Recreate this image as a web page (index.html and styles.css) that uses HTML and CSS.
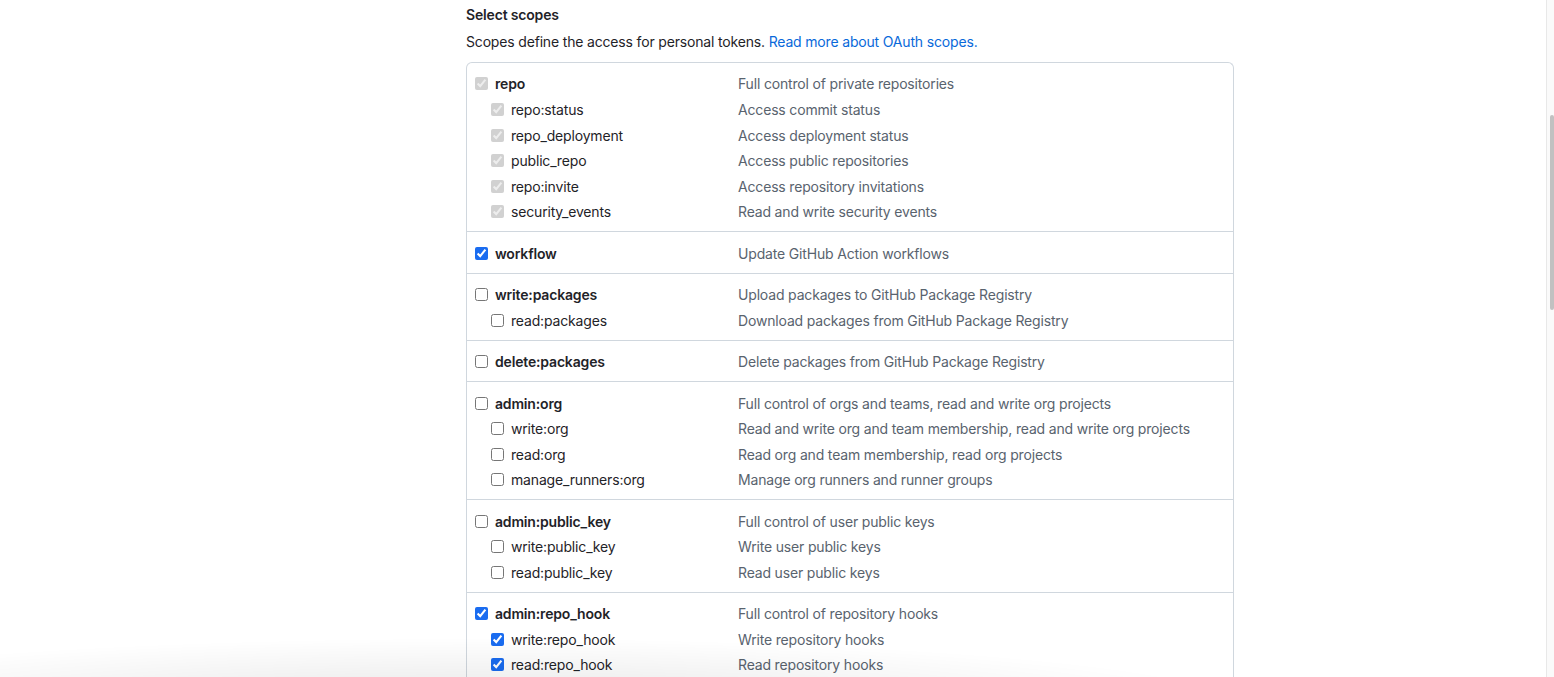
FILE: index.html
```html
<!DOCTYPE html>
<html lang="en">
<head>
<meta charset="utf-8">
<title>Select scopes</title>
<link rel="stylesheet" href="styles.css">
</head>
<body>
<div class="page">
  <main class="main">
    <h3 class="title">Select scopes</h3>
    <p class="note">Scopes define the access for personal tokens. <a href="#" class="link">Read more about OAuth scopes.</a></p>
    <div class="scopes">
      <div class="group">
        <label class="row"><span class="name top"><input type="checkbox" checked disabled>repo</span><span class="desc">Full control of private repositories</span></label>
        <label class="row"><span class="name sub"><input type="checkbox" checked disabled>repo:status</span><span class="desc">Access commit status</span></label>
        <label class="row"><span class="name sub"><input type="checkbox" checked disabled>repo_deployment</span><span class="desc">Access deployment status</span></label>
        <label class="row"><span class="name sub"><input type="checkbox" checked disabled>public_repo</span><span class="desc">Access public repositories</span></label>
        <label class="row"><span class="name sub"><input type="checkbox" checked disabled>repo:invite</span><span class="desc">Access repository invitations</span></label>
        <label class="row"><span class="name sub"><input type="checkbox" checked disabled>security_events</span><span class="desc">Read and write security events</span></label>
      </div>
      <div class="group">
        <label class="row"><span class="name top"><input type="checkbox" checked>workflow</span><span class="desc">Update GitHub Action workflows</span></label>
      </div>
      <div class="group">
        <label class="row"><span class="name top"><input type="checkbox">write:packages</span><span class="desc">Upload packages to GitHub Package Registry</span></label>
        <label class="row"><span class="name sub"><input type="checkbox">read:packages</span><span class="desc">Download packages from GitHub Package Registry</span></label>
      </div>
      <div class="group">
        <label class="row"><span class="name top"><input type="checkbox">delete:packages</span><span class="desc">Delete packages from GitHub Package Registry</span></label>
      </div>
      <div class="group">
        <label class="row"><span class="name top"><input type="checkbox">admin:org</span><span class="desc">Full control of orgs and teams, read and write org projects</span></label>
        <label class="row"><span class="name sub"><input type="checkbox">write:org</span><span class="desc">Read and write org and team membership, read and write org projects</span></label>
        <label class="row"><span class="name sub"><input type="checkbox">read:org</span><span class="desc">Read org and team membership, read org projects</span></label>
        <label class="row"><span class="name sub"><input type="checkbox">manage_runners:org</span><span class="desc">Manage org runners and runner groups</span></label>
      </div>
      <div class="group">
        <label class="row"><span class="name top"><input type="checkbox">admin:public_key</span><span class="desc">Full control of user public keys</span></label>
        <label class="row"><span class="name sub"><input type="checkbox">write:public_key</span><span class="desc">Write user public keys</span></label>
        <label class="row"><span class="name sub"><input type="checkbox">read:public_key</span><span class="desc">Read user public keys</span></label>
      </div>
      <div class="group">
        <label class="row"><span class="name top"><input type="checkbox" checked>admin:repo_hook</span><span class="desc">Full control of repository hooks</span></label>
        <label class="row"><span class="name sub"><input type="checkbox" checked>write:repo_hook</span><span class="desc">Write repository hooks</span></label>
        <label class="row"><span class="name sub"><input type="checkbox" checked>read:repo_hook</span><span class="desc">Read repository hooks</span></label>
      </div>
    </div>
  </main>
</div>
<div class="bottom-shade"></div>
<div class="scrollbar"><div class="thumb"></div></div>
</body>
</html>
```

FILE: styles.css
```css
html, body {
  margin: 0;
  padding: 0;
  height: 677px;
  overflow: hidden;
  background: #ffffff;
}

body {
  font-family: Inter, "Liberation Sans", Arial, sans-serif;
  font-size: 14px;
  letter-spacing: -0.17px;
  color: #1f2328;
}

.page {
  display: flex;
  padding-left: 466px;
}

.main {
  width: 768px;
  padding-top: 4px;
}

.title {
  margin: 0;
  font-size: 14px;
  line-height: 21px;
  font-weight: 600;
}

.note {
  margin: 6px 0 10px;
  line-height: 21px;
}

.link {
  color: #0969da;
  text-decoration: none;
}

.scopes {
  border: 1px solid #d0d7de;
  border-bottom: 0;
  border-radius: 6px 6px 0 0;
}

.group {
  padding: 7.4px 8px;
}

.group + .group {
  border-top: 1px solid #d0d7de;
}

.row {
  display: flex;
  align-items: center;
  height: 25.6px;
  box-sizing: border-box;
  padding-top: 1.5px;
}

.name {
  display: flex;
  align-items: center;
  width: 263px;
  flex: none;
  line-height: 21px;
}

.name.top {
  font-weight: 600;
}

.name.sub {
  padding-left: 16px;
  width: 247px;
}

.name input {
  width: 13px;
  height: 13px;
  margin: 0 7px 0 0;
  accent-color: #1a6cf0;
}

.desc {
  color: #59636e;
  line-height: 21px;
}

.bottom-shade {
  position: fixed;
  left: -300px;
  bottom: -30px;
  width: 1560px;
  height: 70px;
  background: radial-gradient(ellipse at 50% 100%, rgba(0, 0, 0, 0.1) 0%, rgba(0, 0, 0, 0.045) 40%, rgba(0, 0, 0, 0) 70%);
  pointer-events: none;
}

.scrollbar {
  position: fixed;
  top: 0;
  right: 0;
  width: 7px;
  height: 677px;
  background: #fafafa;
  border-left: 1px solid #e8e8e8;
}

.thumb {
  margin: 115px 0 0 3px;
  width: 4px;
  height: 195px;
  background: #c1c1c1;
  border-radius: 3px;
}
```
